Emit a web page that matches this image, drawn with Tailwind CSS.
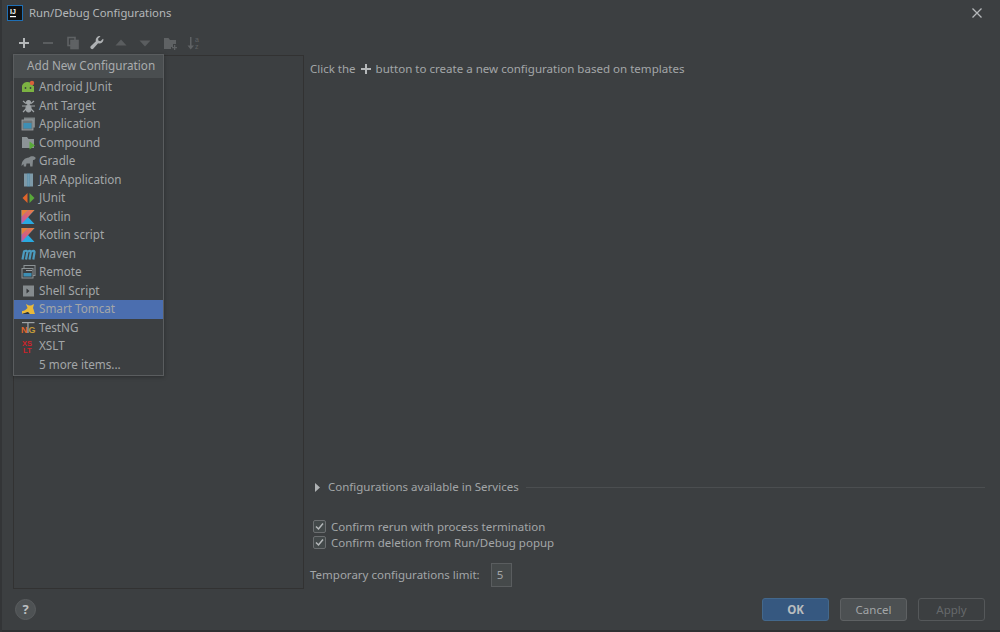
<!doctype html>
<html><head><meta charset="utf-8"><script src="https://cdn.jsdelivr.net/npm/@tailwindcss/browser@4"></script></head>
<body class="m-0 bg-[#3c3f41]">
<div class="relative w-[1000px] h-[632px] overflow-hidden bg-[#3c3f41] text-[#a3a6a8] text-[11.5px] font-['Noto_Sans','Open_Sans',sans-serif] flex flex-col border-l-2 border-[#333537]">
  <svg width="0" height="0" class="absolute"><defs><linearGradient id="kt" x1="1" y1="0" x2="0" y2="1"><stop offset="0" stop-color="#e7813a"/><stop offset="0.55" stop-color="#d9607a"/><stop offset="1" stop-color="#b25bb5"/></linearGradient></defs></svg>
  <!-- title bar -->
  <div class="h-[26px] flex items-center pl-[5px] pr-[17px] shrink-0">
    <svg width="16" height="16" viewBox="0 0 16 16" class="mr-[6px]"><rect x="0" y="0" width="16" height="16" fill="#1f6fb5"/><rect x="1" y="1" width="14" height="14" fill="#111"/><text x="3" y="9" font-size="7" font-weight="700" fill="#fff" font-family="Liberation Sans">IJ</text><rect x="3" y="11" width="6" height="1.2" fill="#fff"/></svg>
    <span class="text-[#b4b7b9] text-[11.3px]">Run/Debug Configurations</span>
    <svg width="12" height="12" viewBox="0 0 12 12" class="ml-auto" stroke="#b5b8ba" stroke-width="1.3"><path d="M1.5 1.5l9 9M10.5 1.5l-9 9"/></svg>
  </div>
  <!-- toolbar -->
  <div class="h-[29px] flex items-center pl-[14px] pt-[5px] gap-[8.300px] shrink-0">
    <svg width="16" height="16" viewBox="0 0 16 16" fill="#b5b8ba"><path d="M7 3h2v4h4v2H9v4H7V9H3V7h4z"/></svg>
    <svg width="16" height="16" viewBox="0 0 16 16" fill="#5a5d5f"><rect x="3" y="7" width="10" height="2"/></svg>
    <svg width="16" height="16" viewBox="0 0 16 16" fill="none" stroke="#5f6264" stroke-width="1.6"><rect x="3" y="2.5" width="7" height="8"/><rect x="6" y="5.5" width="7" height="8" fill="#5f6264"/></svg>
    <svg width="16" height="16" viewBox="0 0 16 16" fill="#aeb1b3"><path d="M14.500 4.500a4 4 0 0 1-5.400 3.800L4.200 13.800a1.800 1.800 0 0 1-2.500-2.500l5.200-5A4 4 0 0 1 11.500 1.200L9 3.800l.5 2 2 .5L14 3.800z"/></svg>
    <svg width="16" height="16" viewBox="0 0 16 16" fill="#5a5d5f"><path d="M8 4.500l5.500 6h-11z"/></svg>
    <svg width="16" height="16" viewBox="0 0 16 16" fill="#5a5d5f"><path d="M2.500 5.500h11l-5.500 6z"/></svg>
    <svg width="16" height="16" viewBox="0 0 16 16" fill="#5f6264"><path d="M2 3h4.500l1.500 2h6v4h-3v3H9v2H2z"/><path d="M12 10h1.300v2H15v1.300h-1.700V15H12v-1.700h-2V12h2z"/></svg>
    <svg width="16" height="16" viewBox="0 0 16 16" fill="#5f6264"><path d="M4 2h1.500v8.500H8L4.700 14.500 1.500 10.500H4z"/><text x="9" y="7" font-size="7" font-family="Liberation Sans">a</text><text x="9" y="14" font-size="7" font-family="Liberation Sans">z</text></svg>
  </div>
  <!-- body -->
  <div class="flex-1 flex min-h-0 pl-[11px]">
    <div class="w-[291px] h-[534px] border border-[#323232] shrink-0"></div>
    <div class="flex-1 flex flex-col pl-[6px] pr-[15px]">
      <div class="h-[27px] flex items-center text-[#a3a6a8]">
        <span>Click the</span>
        <svg width="12" height="12" viewBox="0 0 12 12" fill="#b5b8ba" class="mx-[4px]"><path d="M5 1h2v4h4v2H7v4H5V7H1V5h4z"/></svg>
        <span class="text-[11.550px]">button to create a new configuration based on templates</span>
      </div>
      <div class="flex-1"></div>
      <div class="flex items-center h-[18px] pl-[4px] gap-[7px]">
        <svg width="7" height="9" viewBox="0 0 7 9" fill="#aeb1b3"><path d="M1 0l5 4.500-5 4.500z"/></svg>
        <span>Configurations available in Services</span>
        <div class="flex-1 h-px bg-[#4b4e50]"></div>
      </div>
      <div class="h-[22px]"></div>
      <label class="flex items-center h-[16.500px] pl-[3px] gap-[5px]">
        <span class="w-[13px] h-[13px] rounded-[2px] border border-[#6b6e70] bg-[#43494a] flex items-center justify-center"><svg width="9" height="9" viewBox="0 0 9 9" fill="none" stroke="#b5b8ba" stroke-width="1.500"><path d="M1 4.500l2.500 2.500L8 1.500"/></svg></span>
        <span>Confirm rerun with process termination</span>
      </label>
      <label class="flex items-center h-[16.500px] pl-[3px] gap-[5px]">
        <span class="w-[13px] h-[13px] rounded-[2px] border border-[#6b6e70] bg-[#43494a] flex items-center justify-center"><svg width="9" height="9" viewBox="0 0 9 9" fill="none" stroke="#b5b8ba" stroke-width="1.500"><path d="M1 4.500l2.500 2.500L8 1.500"/></svg></span>
        <span>Confirm deletion from Run/Debug popup</span>
      </label>
      <div class="flex items-center h-[24px] mt-[12px] mb-[1px] gap-[11px]">
        <span>Temporary configurations limit:</span>
        <span class="w-[21px] h-[24px] border border-[#5a5d5f] bg-[#45494a] pl-[5px] flex items-center">5</span>
      </div>
    </div>
  </div>
  <!-- footer -->
  <div class="h-[42px] flex items-start pl-[13px] pr-[15px] shrink-0 pt-[9px]">
    <div class="w-[21px] h-[21px] rounded-full bg-[#4e5254] border border-[#5a5d5f] flex items-center justify-center text-[#bdc0c2] font-bold text-[13px] leading-none mt-[2px]">?</div>
    <div class="ml-auto flex gap-[11px] mt-[1px]">
      <button class="w-[67px] h-[23px] rounded-[3px] bg-[#365880] border border-[#43688c] text-[#b9bcbe] font-bold">OK</button>
      <button class="w-[67px] h-[23px] rounded-[3px] bg-[#4c5052] border border-[#5e6163] text-[#a3a6a8]">Cancel</button>
      <button class="w-[67px] h-[23px] rounded-[3px] border border-[#55585a] text-[#66696b]">Apply</button>
    </div>
  </div>
  <div class="h-[2px] bg-[#2f3133] shrink-0"></div>
  <!-- popup -->
  <div class="absolute left-[11px] top-[54px] w-[151px] h-[322px] bg-[#3c3f41] border border-[#5a5d5f] text-[11.700px] shadow-[0_1px_4px_rgba(0,0,0,0.3)]">
    <div class="h-[23px] bg-[#4a4e50] flex items-center pl-[13px] pb-[2px] text-[#a9acae] whitespace-nowrap">Add New Configuration</div>
    <ul class="flex flex-col">
      <li class="h-[18.500px] flex items-center pl-[7px] gap-[3px]"><svg width="15" height="14" viewBox="0 0 15 14"><path d="M1 7a5.500 4.500 0 0 1 11-1l1 0v6H1z" fill="#7cb342"/><circle cx="4.500" cy="8" r="0.900" fill="#3c3f41"/><circle cx="9.500" cy="8" r="0.900" fill="#3c3f41"/><circle cx="11" cy="3" r="2.200" fill="#d9603b"/></svg><span>Android JUnit</span></li>
      <li class="h-[18.500px] flex items-center pl-[7px] gap-[3px]"><svg width="15" height="14" viewBox="0 0 15 14" fill="none" stroke="#9ea3a6" stroke-width="1.200"><ellipse cx="7.500" cy="3.500" rx="2" ry="2" fill="#9ea3a6"/><ellipse cx="7.500" cy="9.500" rx="2.500" ry="3.500" fill="#9ea3a6"/><path d="M2 2l3 2.500M13 2l-3 2.500M1 7h4M14 7h-4M2 13l3-3M13 13l-3-3"/></svg><span>Ant Target</span></li>
      <li class="h-[18.500px] flex items-center pl-[7px] gap-[3px]"><svg width="15" height="14" viewBox="0 0 15 14"><rect x="3" y="0.500" width="11" height="10" fill="#7d8486"/><rect x="1" y="3" width="11" height="10" fill="#6e7577" stroke="#9ea3a6" stroke-width="0.800"/><rect x="2.500" y="6" width="8" height="5.500" fill="#3d8fb4"/></svg><span>Application</span></li>
      <li class="h-[18.500px] flex items-center pl-[7px] gap-[3px]"><svg width="15" height="14" viewBox="0 0 15 14"><path d="M1 1h5l1.500 2H13v9H1z" fill="#8c9396"/><path d="M8.500 5.500l5.500 4-5.500 4z" fill="#59a83a"/></svg><span>Compound</span></li>
      <li class="h-[18.500px] flex items-center pl-[7px] gap-[3px]"><svg width="15" height="14" viewBox="0 0 15 14" fill="#83898c"><path d="M0.500 12C0.500 7 4 3.500 8 3.500 9.500 2 12.500 1.500 14.500 3.500c.5 1.500-1 2.700-2.500 2.500l-.5 6.500H9.200l-.3-3H5.500l-.5 3H2.800l-.3-2.500z"/></svg><span>Gradle</span></li>
      <li class="h-[18.500px] flex items-center pl-[7px] gap-[3px]"><svg width="15" height="14" viewBox="0 0 15 14"><rect x="3" y="0.500" width="9" height="13" fill="#7e9aa8"/><rect x="6.300" y="0.500" width="2.400" height="13" fill="#3f7fa0"/><path d="M6.500 2h2M6.500 4h2M6.500 6h2M6.500 8h2M6.500 10h2M6.500 12h2" stroke="#c7d2d8" stroke-width="0.700"/></svg><span>JAR Application</span></li>
      <li class="h-[18.500px] flex items-center pl-[7px] gap-[3px]"><svg width="15" height="14" viewBox="0 0 15 14"><path d="M6.500 2v10L1.500 7z" fill="#e0652b"/><path d="M8.500 2v10L13.500 7z" fill="#59a83a"/></svg><span>JUnit</span></li>
      <li class="h-[18.500px] flex items-center pl-[7px] gap-[3px]"><svg width="15" height="14" viewBox="0 0 15 14"><path d="M0.500 0h13L7 7l6.500 7H0.500z" fill="#29a9e0"/><path d="M0.500 0h6.800L0.500 7z" fill="#e7813a"/><path d="M7.300 0h6.200L0.500 14V7z" fill="url(#kt)"/></svg><span>Kotlin</span></li>
      <li class="h-[18.500px] flex items-center pl-[7px] gap-[3px]"><svg width="15" height="14" viewBox="0 0 15 14"><path d="M0.500 0h13L7 7l6.500 7H0.500z" fill="#29a9e0"/><path d="M0.500 0h6.800L0.500 7z" fill="#e7813a"/><path d="M7.300 0h6.200L0.500 14V7z" fill="url(#kt)"/></svg><span>Kotlin script</span></li>
      <li class="h-[18.500px] flex items-center pl-[7px] gap-[3px]"><svg width="15" height="14" viewBox="0 0 15 14" fill="none" stroke="#4b9bbf" stroke-width="2.200"><path d="M1.500 12.500l1.500-8c2-1.500 3.500-.5 3.300 1l-1.300 7M6.300 5c2-2 3.700-1.200 3.500.3L8.500 12.500M9.800 5c2-2 4-1.200 3.700.3L12.300 12.500"/></svg><span>Maven</span></li>
      <li class="h-[18.500px] flex items-center pl-[7px] gap-[3px]"><svg width="15" height="14" viewBox="0 0 15 14"><rect x="3" y="0.500" width="11" height="10" fill="none" stroke="#8c9396"/><rect x="1" y="3.500" width="11" height="9.500" fill="#3c3f41" stroke="#8c9396" stroke-width="1"/><rect x="2.500" y="8" width="8" height="3.500" fill="#3d8fb4"/><path d="M5 5.500h6" stroke="#9ea3a6"/></svg><span>Remote</span></li>
      <li class="h-[18.500px] flex items-center pl-[7px] gap-[3px]"><svg width="15" height="14" viewBox="0 0 15 14"><rect x="2" y="1.500" width="11" height="11" fill="#858b8e"/><path d="M5.500 4.500L8.500 7l-3 2.500z" fill="#34373a"/></svg><span>Shell Script</span></li>
      <li class="h-[18.500px] flex items-center pl-[7px] gap-[3px] bg-[#4b6eaf]"><svg width="15" height="14" viewBox="0 0 15 14"><path d="M1 9c3 0 4-2 5.500-3L5 2l3 1.500h2L13 2l-1 4c1 2 1 4 2 6H9L7 10l-6 2z" fill="#e8b93b"/><path d="M1 12l6-2 1.500 2z" fill="#2f3133"/></svg><span>Smart Tomcat</span></li>
      <li class="h-[18.500px] flex items-center pl-[7px] gap-[3px]"><svg width="15" height="14" viewBox="0 0 15 14"><rect x="1" y="1" width="12.500" height="1.200" fill="#9ea3a6"/><text x="0" y="11.500" font-size="9" font-weight="700" fill="#e0652b" font-family="Liberation Sans">N</text><text x="7.500" y="11.500" font-size="9" font-weight="700" fill="#c29b3a" font-family="Liberation Sans">G</text><rect x="6.300" y="1" width="1.300" height="11" fill="#9ea3a6"/></svg><span>TestNG</span></li>
      <li class="h-[18.500px] flex items-center pl-[7px] gap-[3px]"><svg width="15" height="14" viewBox="0 0 15 14"><text x="1" y="6.500" font-size="7.500" font-weight="700" fill="#d0232a" font-family="Liberation Sans">XS</text><text x="2" y="13.500" font-size="7.500" font-weight="700" fill="#d0232a" font-family="Liberation Sans">LT</text></svg><span>XSLT</span></li>
      <li class="h-[18.500px] flex items-center pl-[25px]">5 more items...</li>
    </ul>
  </div>
</div>
</body></html>
